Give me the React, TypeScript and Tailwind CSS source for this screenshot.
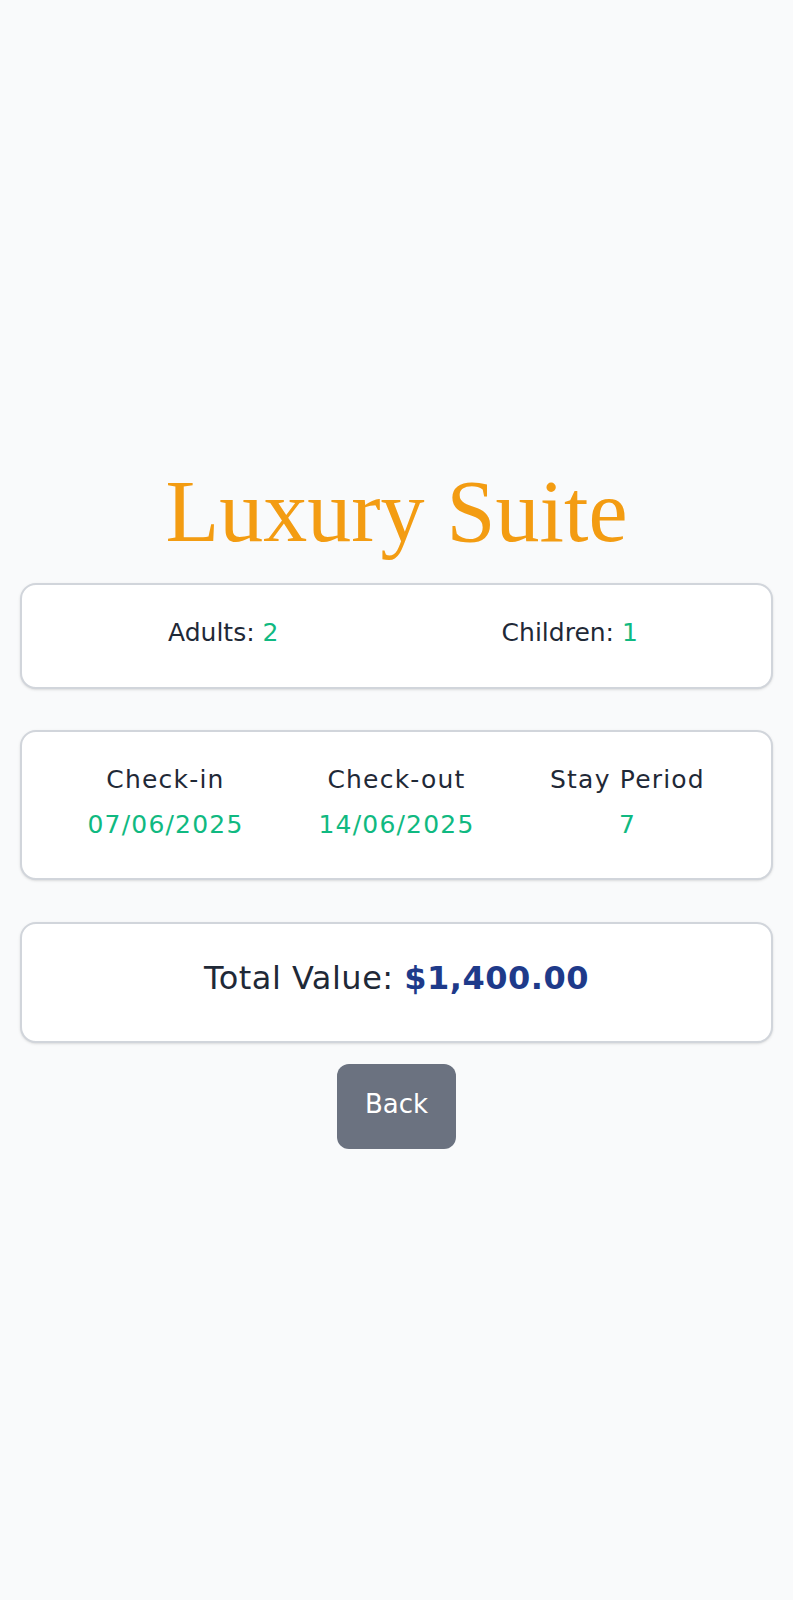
import React from 'react';

const sans = "font-['DejaVu_Sans',sans-serif]";

const Stat = ({ label, value }: { label: string; value: string }) => {
    return (
        <div className="flex flex-col items-center tracking-[1.2px]">
            <span className="text-[25px] leading-[32px] text-[#1f2937]">{label}</span>
            <span className="mt-[13px] text-[25px] leading-[32px] text-[#10b981] font-medium">{value}</span>
        </div>
    );
};

const App = () => {
    return (
        <div className={`min-h-screen w-full bg-[#f9fafb] flex flex-col justify-center pt-4 px-5 ${sans}`}>
            {/* Title */}
            <h1 className="text-center text-[88px] leading-[88px] text-[#f39c12] font-['Liberation_Serif',serif] mb-[27px]">
                Luxury Suite
            </h1>

            {/* Guests */}
            <div className="bg-white border-2 border-[#d1d5db] rounded-2xl shadow-sm px-7 pt-8 pb-[38px] grid grid-cols-2">
                <div className="text-center text-[25px] leading-[32px] text-[#1f2937]">
                    Adults: <span className="text-[#10b981] font-medium">2</span>
                </div>
                <div className="text-center text-[25px] leading-[32px] text-[#1f2937]">
                    Children: <span className="text-[#10b981] font-medium">1</span>
                </div>
            </div>

            {/* Dates */}
            <div className="mt-[41px] bg-white border-2 border-[#d1d5db] rounded-2xl shadow-sm px-7 pt-8 pb-[37px] grid grid-cols-3">
                <Stat label="Check-in" value="07/06/2025" />
                <Stat label="Check-out" value="14/06/2025" />
                <Stat label="Stay Period" value="7" />
            </div>

            {/* Total */}
            <div className="mt-[42px] bg-white border-2 border-[#d1d5db] rounded-2xl shadow-sm px-7 pt-[34px] pb-[43px] text-center">
                <span className="text-[32px] leading-[40px] text-[#1f2937] font-medium tracking-[0.5px]">
                    Total Value: <span className="font-bold text-[#1e3a8a]">$1,400.00</span>
                </span>
            </div>

            <div className="mt-[21px] flex justify-center">
                <button className="bg-[#6b7280] text-white rounded-xl px-[28px] pt-6 pb-[29px] text-[26px] leading-[32px] font-medium">
                    Back
                </button>
            </div>
        </div>
    );
};

export default App;
